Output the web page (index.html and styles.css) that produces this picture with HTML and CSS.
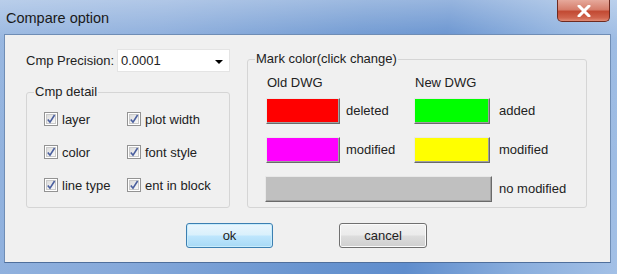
FILE: index.html
```html
<!DOCTYPE html>
<html lang="en">
<head>
    <meta charset="UTF-8">
    <title>Compare option</title>
    <link rel="stylesheet" href="styles.css">
</head>
<body>
    <svg class="defs" width="0" height="0">
        <defs>
            <linearGradient id="boxfill" x1="0" y1="0" x2="1" y2="1">
                <stop offset="0" stop-color="#dadada"/>
                <stop offset="1" stop-color="#fbfbfb"/>
            </linearGradient>
            <symbol id="chk" viewBox="0 0 14 14">
                <rect x="0.5" y="0.5" width="13" height="13" fill="#fff" stroke="#939393"/>
                <rect x="2.5" y="2.5" width="9" height="9" fill="url(#boxfill)" stroke="#cacaca"/>
                <path d="M3.8 7.4 L6 10.2 L10.6 3" fill="none" stroke="#4a5f9e" stroke-width="1.6"/>
            </symbol>
        </defs>
    </svg>

    <div class="window">
        <div class="titlebar">
            <span class="title">Compare option</span>
            <div class="close">
                <svg width="16" height="12" viewBox="0 0 16 12">
                    <path d="M3 1 L13 11 M13 1 L3 11" stroke="#fff" stroke-width="3" stroke-linecap="round"/>
                </svg>
            </div>
        </div>

        <div class="client">
            <div class="main">
                <div class="left">
                    <div class="precision">
                        <label>Cmp Precision:</label>
                        <div class="combo">
                            <span>0.0001</span>
                            <span class="arrow"></span>
                        </div>
                    </div>

                    <fieldset class="group detail">
                        <legend>Cmp detail</legend>
                        <div class="checks">
                            <div class="check"><svg><use href="#chk"/></svg>layer</div>
                            <div class="check"><svg><use href="#chk"/></svg>plot width</div>
                            <div class="check"><svg><use href="#chk"/></svg>color</div>
                            <div class="check"><svg><use href="#chk"/></svg>font style</div>
                            <div class="check"><svg><use href="#chk"/></svg>line type</div>
                            <div class="check"><svg><use href="#chk"/></svg>ent in block</div>
                        </div>
                    </fieldset>
                </div>

                <fieldset class="group marks">
                    <legend>Mark color(click change)</legend>
                    <div class="swatches">
                        <div class="head">Old DWG</div>
                        <div></div>
                        <div class="head">New DWG</div>
                        <div></div>

                        <div class="swatch red"></div>
                        <div class="lbl">deleted</div>
                        <div class="swatch green"></div>
                        <div class="lbl far">added</div>

                        <div class="swatch magenta"></div>
                        <div class="lbl">modified</div>
                        <div class="swatch yellow"></div>
                        <div class="lbl far">modified</div>

                        <div class="swatch gray wide"></div>
                        <div class="lbl far">no modified</div>
                    </div>
                </fieldset>
            </div>

            <div class="buttons">
                <button class="btn default">ok</button>
                <button class="btn">cancel</button>
            </div>
        </div>
    </div>
</body>
</html>
```

FILE: styles.css
```css
body {
    margin: 0;
    font-family: "Liberation Sans", Arial, sans-serif;
    font-size: 13px;
    color: #222;
    background: #fff;
}
.defs {
    position: absolute;
}
.window {
    width: 617px;
    height: 274px;
    display: flex;
    flex-direction: column;
    background:
        linear-gradient(to bottom, rgba(255,255,255,0.35), rgba(255,255,255,0.05) 40px, rgba(255,255,255,0) 60%),
        linear-gradient(100deg, #94b4df 0%, #86a9da 25%, #6793cf 55%, #5f8dcd 68%, #8aaedd 85%, #a3c0e6 100%);
}
.titlebar {
    height: 34px;
    display: flex;
    justify-content: space-between;
    align-items: flex-start;
    padding-left: 6px;
}
.title {
    font-size: 14.5px;
    color: #1a1a1a;
    margin-top: 10px;
}
.close {
    width: 53px;
    height: 22px;
    margin-right: 7px;
    box-sizing: border-box;
    border: 1px solid #6e2a20;
    border-top: none;
    border-radius: 0 0 5px 5px;
    background: linear-gradient(to bottom, #e6a99b 0%, #d67e6c 45%, #c24a33 55%, #d0654e 85%, #e08c76 100%);
    display: flex;
    align-items: center;
    justify-content: center;
}
.client {
    margin: 0 6px 0 4px;
    height: 229px;
    box-sizing: border-box;
    background: #f0f0f0;
    border: 1px solid #6f8db5;
    border-bottom-color: #4f6f9c;
    padding: 14px 0 0 21px;
}
.main {
    display: flex;
    gap: 17px;
}
.left {
    width: 204px;
}
.precision {
    display: flex;
    align-items: center;
    height: 23px;
}
.precision label {
    width: 91px;
}
.combo {
    width: 113px;
    height: 23px;
    box-sizing: border-box;
    background: #fff;
    border: 1px solid #e4e4e4;
    display: flex;
    align-items: center;
    justify-content: space-between;
    padding: 0 6px 0 3px;
}
.arrow {
    width: 0;
    height: 0;
    border-left: 4px solid transparent;
    border-right: 4px solid transparent;
    border-top: 4px solid #000;
    margin-top: 2px;
}
.group {
    margin: 0;
    padding: 0;
    border: 1px solid #d5d5d5;
    border-radius: 3px;
    box-sizing: border-box;
    min-width: 0;
}
.group legend {
    line-height: 16px;
    padding: 0 1px;
    margin-left: 7px;
}
.detail {
    margin-top: 12px;
    width: 204px;
    height: 124px;
}
.checks {
    display: grid;
    grid-template-columns: 83px auto;
    row-gap: 17px;
    padding: 11px 0 0 17px;
}
.check {
    display: flex;
    align-items: center;
    height: 16px;
    white-space: nowrap;
}
.check svg {
    width: 14px;
    height: 14px;
    margin-right: 4px;
    flex: none;
}
.marks {
    margin-top: 2px;
    width: 340px;
    height: 157px;
}
.swatches {
    display: grid;
    grid-template-columns: 75px 73px 76px auto;
    grid-template-rows: 23px 39px 39px 26px;
    padding: 8px 0 0 18px;
}
.head {
    line-height: 16px;
    padding-left: 1px;
}
.swatch {
    height: 26px;
    box-sizing: border-box;
    border: 1px solid;
    border-color: #e8e8e8 #6a6a6a #6a6a6a #e8e8e8;
    box-shadow: inset -1px -1px 0 #a0a0a0;
}
.red { background: #ff0000; margin-right: 1px; }
.green { background: #00ff00; }
.magenta { background: #ff00ff; margin-right: 1px; }
.yellow { background: #ffff00; }
.gray {
    background: #c0c0c0;
    grid-column: 1 / 4;
    margin-left: -1px;
    margin-right: -2px;
}
.lbl {
    line-height: 26px;
    padding-left: 5px;
    white-space: nowrap;
}
.lbl.far {
    padding-left: 9px;
}
.buttons {
    display: flex;
    gap: 66px;
    margin: 15px 0 0 160px;
}
.btn {
    width: 87px;
    height: 25px;
    padding: 0;
    font-family: inherit;
    font-size: 13px;
    color: #222;
    border: 1px solid #707070;
    border-radius: 3px;
    background: linear-gradient(to bottom, #f2f2f2 0%, #ebebeb 48%, #dddddd 52%, #cfcfcf 100%);
    box-shadow: inset 0 0 0 1px #fbfbfb;
}
.btn.default {
    border-color: #3c7fb1;
    background: linear-gradient(to bottom, #eaf6fd 0%, #d9f0fc 48%, #bee6fd 52%, #a7d9f5 100%);
    box-shadow: inset 0 0 0 1px #c8ecfc;
}
.btn + .btn {
    width: 88px;
}
```
